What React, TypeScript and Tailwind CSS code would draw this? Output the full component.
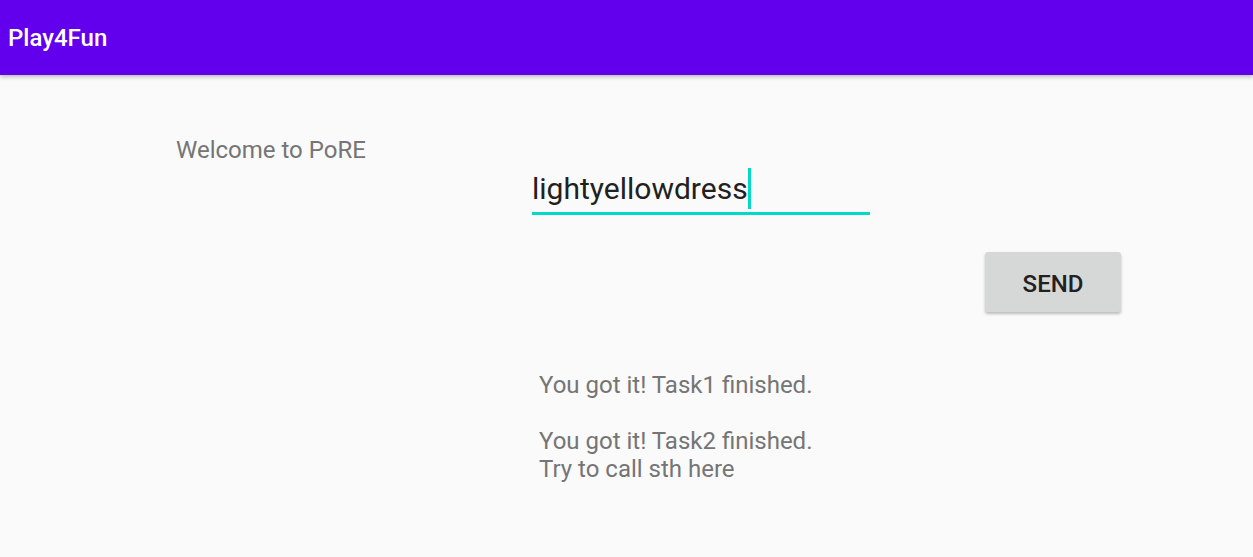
import React from 'react';

// Android-style activity: app bar, welcome label, edit text, send button and task log
const App: React.FC = () => {
  const messages = ['You got it! Task1 finished.', '', 'You got it! Task2 finished.', 'Try to call sth here'];

  return (
    <div className="min-h-screen w-full bg-[#fafafa] font-['Roboto',sans-serif]">
      {/* App bar */}
      <header className="relative z-10 flex h-[75px] items-center bg-[#6200ee] px-2 shadow-[0_2px_4px_rgba(0,0,0,0.25)]">
        <h1 className="text-[24px] font-medium text-white">Play4Fun</h1>
      </header>

      {/* Content */}
      <div className="flex pt-[60px]">
        <div className="w-[532px] pl-[176px]">
          <p className="text-[24px] leading-[30px] text-[#757575]">Welcome to PoRE</p>
        </div>

        <div className="flex flex-col">
          <div className="mt-[34px] flex w-[338px] items-start border-b-[3px] border-[#03dac5] pb-[3px]">
            <span className="text-[30px] leading-[40px] text-[#212121]">lightyellowdress</span>
            <span className="-mt-[1px] h-[41px] w-[3px] bg-[#03dac5]" />
          </div>

          <div className="ml-[453px] mt-[37px]">
            <button className="h-[60px] w-[136px] rounded-[3px] bg-[#d6d7d7] pt-[3px] text-[24px] font-medium text-[#212121] shadow-[0_2px_3px_rgba(0,0,0,0.25)]">
              SEND
            </button>
          </div>

          <div className="ml-[7px] mt-[59px] text-[24px] leading-[28px] text-[#757575]">
            {messages.map((m, i) => (
              <p key={i} className="h-[28px]">{m}</p>
            ))}
          </div>
        </div>
      </div>
    </div>
  );
};

export default App;
